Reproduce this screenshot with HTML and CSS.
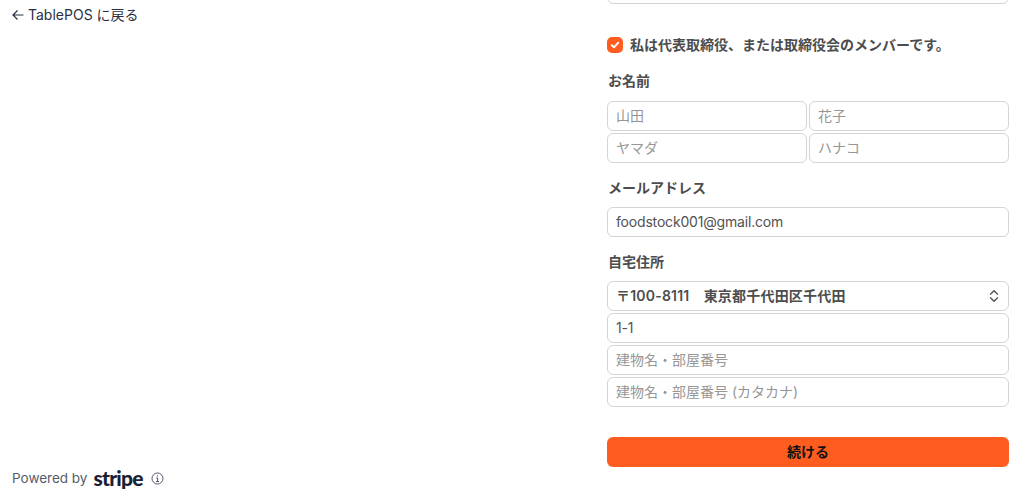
FILE: index.html
```html
<!DOCTYPE html>
<html lang="ja">
<head>
<meta charset="utf-8">
<title>TablePOS</title>
<link rel="stylesheet" href="styles.css">
</head>
<body>
<div class="page">
  <aside class="side">
    <a class="back" href="#">
      <svg class="back-icon" width="12" height="12" viewBox="0 0 12 12" fill="none" stroke="currentColor" stroke-width="1.2"><path d="M11.5 6H1M5.5 1.5 1 6l4.5 4.5"/></svg>
      <span>TablePOS に戻る</span>
    </a>
    <div class="powered">
      <span>Powered by</span>
      <span class="stripe">stripe</span>
      <svg class="info" width="13" height="13" viewBox="0 0 13 13" fill="none" stroke="currentColor"><circle cx="6.5" cy="6.5" r="5.5"/><path d="M5.2 6h1.4v3.4M5 9.5h3M6.5 3.2v1.2"/></svg>
    </div>
  </aside>
  <main class="form">
    <input class="field clipped" type="text" aria-label="前の項目">
    <label class="check">
      <span class="box"><svg width="12" height="12" viewBox="0 0 12 12" fill="none" stroke="#fff" stroke-width="2" stroke-linecap="round" stroke-linejoin="round"><path d="M2.8 6.2 5 8.3l4.2-4.6"/></svg></span>
      <span class="check-text">私は代表取締役、または取締役会のメンバーです。</span>
    </label>
    <section class="group">
      <h2 class="label">お名前</h2>
      <div class="grid">
        <input class="field" type="text" placeholder="山田">
        <input class="field" type="text" placeholder="花子">
        <input class="field" type="text" placeholder="ヤマダ">
        <input class="field" type="text" placeholder="ハナコ">
      </div>
    </section>
    <section class="group">
      <h2 class="label">メールアドレス</h2>
      <input class="field" type="text" value="foodstock001@gmail.com">
    </section>
    <section class="group">
      <h2 class="label">自宅住所</h2>
      <div class="stack">
        <div class="select-wrap">
          <select class="field select"><option>〒100-8111　東京都千代田区千代田</option></select>
          <svg class="chevrons" width="10" height="14" viewBox="0 0 10 14" fill="none" stroke="#525252" stroke-width="1.4"><path d="M1.2 5.4 5 1.8l3.8 3.6M1.2 8.6 5 12.2l3.8-3.6"/></svg>
        </div>
        <input class="field" type="text" value="1-1">
        <input class="field" type="text" placeholder="建物名・部屋番号">
        <input class="field" type="text" placeholder="建物名・部屋番号 (カタカナ)">
      </div>
    </section>
    <button class="submit" type="button">続ける</button>
  </main>
</div>
</body>
</html>
```
FILE: styles.css
```css
* { box-sizing: border-box; }
html, body { margin: 0; height: 100%; overflow: hidden; background: #fff; }
body {
  font-family: Inter, "Noto Sans CJK JP", sans-serif;
  font-size: 14px;
  color: #4d4d4d;
}
.page { display: flex; height: 498px; justify-content: space-between; }
.side {
  width: 300px;
  display: flex;
  flex-direction: column;
  justify-content: space-between;
  padding: 5px 0 10px 12px;
}
.back {
  display: flex;
  align-items: center;
  gap: 4px;
  height: 20px;
  font-size: 14px;
  line-height: 20px;
  color: #2a2f45;
  text-decoration: none;
}
.powered {
  display: flex;
  align-items: center;
  height: 20px;
  font-size: 13.5px;
  color: #565c6c;
}
.stripe {
  margin-left: 6px;
  font-family: Lato, sans-serif;
  font-weight: 900;
  font-size: 21px;
  letter-spacing: -0.75px;
  color: #1a1f36;
  line-height: 20px;
}
.info { margin-left: 8px; color: #4f5565; }
.form { width: 402px; margin-right: 16px; }
.field {
  display: block;
  width: 100%;
  height: 30px;
  margin: 0;
  padding: 0 8px 2px;
  border: 1px solid #d4d4d4;
  border-radius: 6px;
  background: #fff;
  font: inherit;
  letter-spacing: -0.18px;
  color: #525252;
  outline: none;
}
.field::placeholder { color: #969696; opacity: 1; letter-spacing: 0; }
.clipped { margin-top: -26px; }
.check {
  display: flex;
  align-items: center;
  gap: 7px;
  height: 16px;
  margin-top: 33px;
  font-weight: 600;
}
.check-text { position: relative; top: -1px; }
.box {
  display: flex;
  align-items: center;
  justify-content: center;
  width: 16px;
  height: 16px;
  border-radius: 5px;
  background: #ff5c20;
}
.group { margin-top: 15px; }
.check + .group { margin-top: 18px; }
.label {
  margin: 0 0 9px 1px;
  font-size: 14px;
  line-height: 20px;
  font-weight: 600;
}
.check + .group .label { margin-bottom: 10px; }
.grid { display: grid; grid-template-columns: 1fr 1fr; gap: 2px; }
.stack { display: flex; flex-direction: column; gap: 2px; }
.select-wrap { position: relative; }
.select { appearance: none; -webkit-appearance: none; font-weight: 600; letter-spacing: 0.2px; color: #4d4d4d; }
.chevrons { position: absolute; right: 10px; top: 8px; pointer-events: none; }
.submit {
  display: block;
  width: 100%;
  height: 30px;
  margin-top: 30px;
  padding: 0 0 2px;
  border: 0;
  border-radius: 6px;
  background: #ff5c20;
  color: #111;
  font: inherit;
  font-weight: 600;
}
```
